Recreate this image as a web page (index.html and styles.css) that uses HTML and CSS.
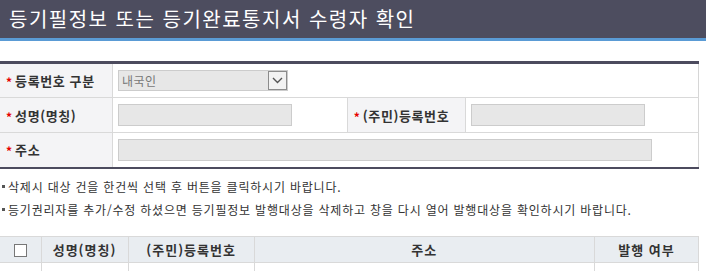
FILE: index.html
```html
<!DOCTYPE html>
<html lang="ko">
<head>
<meta charset="utf-8">
<link rel="stylesheet" href="styles.css">
</head>
<body>
<h1 class="title">등기필정보 또는 등기완료통지서 수령자 확인</h1>
<table class="form">
  <colgroup>
    <col class="c1"><col class="c2"><col class="c3"><col class="c4">
  </colgroup>
  <tr>
    <th><span class="req">*</span>등록번호 구분</th>
    <td colspan="3">
      <div class="select"><span class="sel-text">내국인</span><span class="sel-btn"><svg width="11" height="7" viewBox="0 0 11 7"><path d="M1 1 L5.5 5.5 L10 1" fill="none" stroke="#555" stroke-width="1.4"/></svg></span></div>
    </td>
  </tr>
  <tr>
    <th><span class="req">*</span>성명(명칭)</th>
    <td><div class="input short"></div></td>
    <th><span class="req">*</span>(주민)등록번호</th>
    <td><div class="input short"></div></td>
  </tr>
  <tr>
    <th><span class="req">*</span>주소</th>
    <td colspan="3"><div class="input long"></div></td>
  </tr>
</table>
<ul class="notes">
  <li>삭제시 대상 건을 한건씩 선택 후 버튼을 클릭하시기 바랍니다.</li>
  <li>등기권리자를 추가/수정 하셨으면 등기필정보 발행대상을 삭제하고 창을 다시 열어 발행대상을 확인하시기 바랍니다.</li>
</ul>
<table class="list">
  <colgroup>
    <col class="l1"><col class="l2"><col class="l3"><col class="l4"><col class="l5">
  </colgroup>
  <tr class="head">
    <th><span class="chk"></span></th>
    <th>성명(명칭)</th>
    <th>(주민)등록번호</th>
    <th>주소</th>
    <th>발행 여부</th>
  </tr>
  <tr class="body">
    <td></td><td></td><td></td><td></td><td></td>
  </tr>
</table>
</body>
</html>
```
FILE: styles.css
```css
html, body {
  margin: 0;
  padding: 0;
  background: #ffffff;
  font-family: "Noto Sans CJK KR", "Noto Sans", sans-serif;
  color: #333333;
}
.title {
  margin: 0;
  height: 38px;
  line-height: 37px;
  padding-left: 9px;
  background: #4d4d5f;
  border-bottom: 3px solid #5a9bd5;
  color: #ffffff;
  font-size: 20px;
  font-weight: normal;
  letter-spacing: 1.5px;
}
.form {
  margin-top: 20px;
  width: 699px;
  border-collapse: collapse;
  table-layout: fixed;
  border-top: 3px solid #4c4b5e;
  border-bottom: 2px solid #4c4b5e;
  border-right: 1px solid #d6d6d6;
}
.form .c1 { width: 112px; }
.form .c2 { width: 234px; }
.form .c3 { width: 118px; }
.form .c4 { width: 232px; }
.form tr { height: 35px; }
.form tr + tr th, .form tr + tr td { border-top: 1px solid #d9d9d9; }
.form th, .form td {
  padding: 0;
  vertical-align: middle;
}
.form th {
  background: #f4f4f6;
  text-align: left;
  font-size: 13px;
  font-weight: bold;
  color: #333333;
  padding-left: 6px;
  border-right: 1px solid #d9d9d9;
  white-space: nowrap;
  letter-spacing: 0.6px;
  overflow: hidden;
}
.form td { padding-left: 5px; border-right: 1px solid #d9d9d9; }
.form td:last-child { border-right: none; }
.req {
  color: #e60000;
  font-size: 12px;
  margin-right: 3px;
  position: relative;
  top: 1px;
  letter-spacing: 0;
}
.select {
  width: 168px;
  height: 19px;
  border: 1px solid #cccccc;
  background: #e7e7e7;
  display: flex;
  align-items: center;
  justify-content: space-between;
}
.sel-text {
  font-size: 12px;
  color: #777777;
  padding-left: 3px;
  line-height: 19px;
  letter-spacing: 0.5px;
}
.sel-btn {
  width: 17px;
  height: 17px;
  border: 1px solid #8c8c8c;
  background: #f2f2f2;
  display: flex;
  align-items: center;
  justify-content: center;
}
.input {
  height: 20px;
  border: 1px solid #cccccc;
  background: #e7e7e7;
}
.input.short { width: 172px; }
.input.long { width: 532px; }
.notes {
  list-style: none;
  margin: 6px 0 0 0;
  padding: 0;
  font-size: 12px;
  color: #333333;
  letter-spacing: 0.8px;
}
.notes li {
  line-height: 23px;
  display: flex;
  align-items: center;
  gap: 3px;
  white-space: nowrap;
}
.notes li::before {
  content: "";
  width: 3px;
  height: 3px;
  background: #555555;
  margin-left: 2px;
}
.list {
  margin-top: 15px;
  width: 699px;
  border-collapse: collapse;
  table-layout: fixed;
  border-top: 1px solid #d9d9d9;
  border-right: 1px solid #d9d9d9;
}
.list .l1 { width: 41px; }
.list .l2 { width: 87px; }
.list .l3 { width: 126px; }
.list .l4 { width: 340px; }
.list .l5 { width: 104px; }
.list th, .list td {
  padding: 0;
  border-left: 1px solid #d9d9d9;
}
.list th:first-child, .list td:first-child { border-left: none; }
.list .head th {
  height: 25px;
  background: #e9edf1;
  font-size: 13px;
  font-weight: bold;
  color: #333333;
  text-align: center;
  vertical-align: middle;
  border-bottom: 1px solid #d9d9d9;
  letter-spacing: 1px;
}
.list .body td { height: 30px; }
.chk {
  display: inline-block;
  width: 11px;
  height: 11px;
  border: 1px solid #777777;
  background: #ffffff;
  vertical-align: middle;
  margin-left: 1px;
}
```
